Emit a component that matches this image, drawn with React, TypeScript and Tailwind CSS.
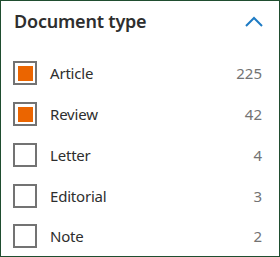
import React from "react";

const items = [
  { label: "Article", count: 225, checked: true },
  { label: "Review", count: 42, checked: true },
  { label: "Letter", count: 4, checked: false },
  { label: "Editorial", count: 3, checked: false },
  { label: "Note", count: 2, checked: false },
];

export default function App() {
  return (
    <div
      className="w-[280px] h-[257px] border border-[#1f4d2f] bg-white box-border text-[#2e2e2e]"
      style={{ fontFamily: '"Noto Sans", "Open Sans", sans-serif' }}
    >
      <div className="h-[52px] flex items-start justify-between pl-[13px] pr-[16px] pt-[6px]">
        <div className="text-[18px] font-semibold leading-[28px] tracking-[-0.2px]">Document type</div>
        <svg width="18" height="11" viewBox="0 0 18 11" className="mt-[9px]">
          <path d="M1 10 L9 2 L17 10" fill="none" stroke="#1e7bc4" strokeWidth="2" />
        </svg>
      </div>
      <div className="flex flex-col">
        {items.map((it) => (
          <div key={it.label} className="h-[40.75px] flex items-center pl-[12px] pr-[17px]">
            <div className="w-[24px] h-[24px] border-2 border-[#737373] flex items-center justify-center box-border">
              {it.checked && <div className="w-[15px] h-[15px] bg-[#eb6500]" />}
            </div>
            <div className="ml-[13px] text-[15px] flex-1 leading-[20px] tracking-[-0.2px]">{it.label}</div>
            <div className="text-[15px] text-[#737373] leading-[20px]">{it.count}</div>
          </div>
        ))}
      </div>
    </div>
  );
}
